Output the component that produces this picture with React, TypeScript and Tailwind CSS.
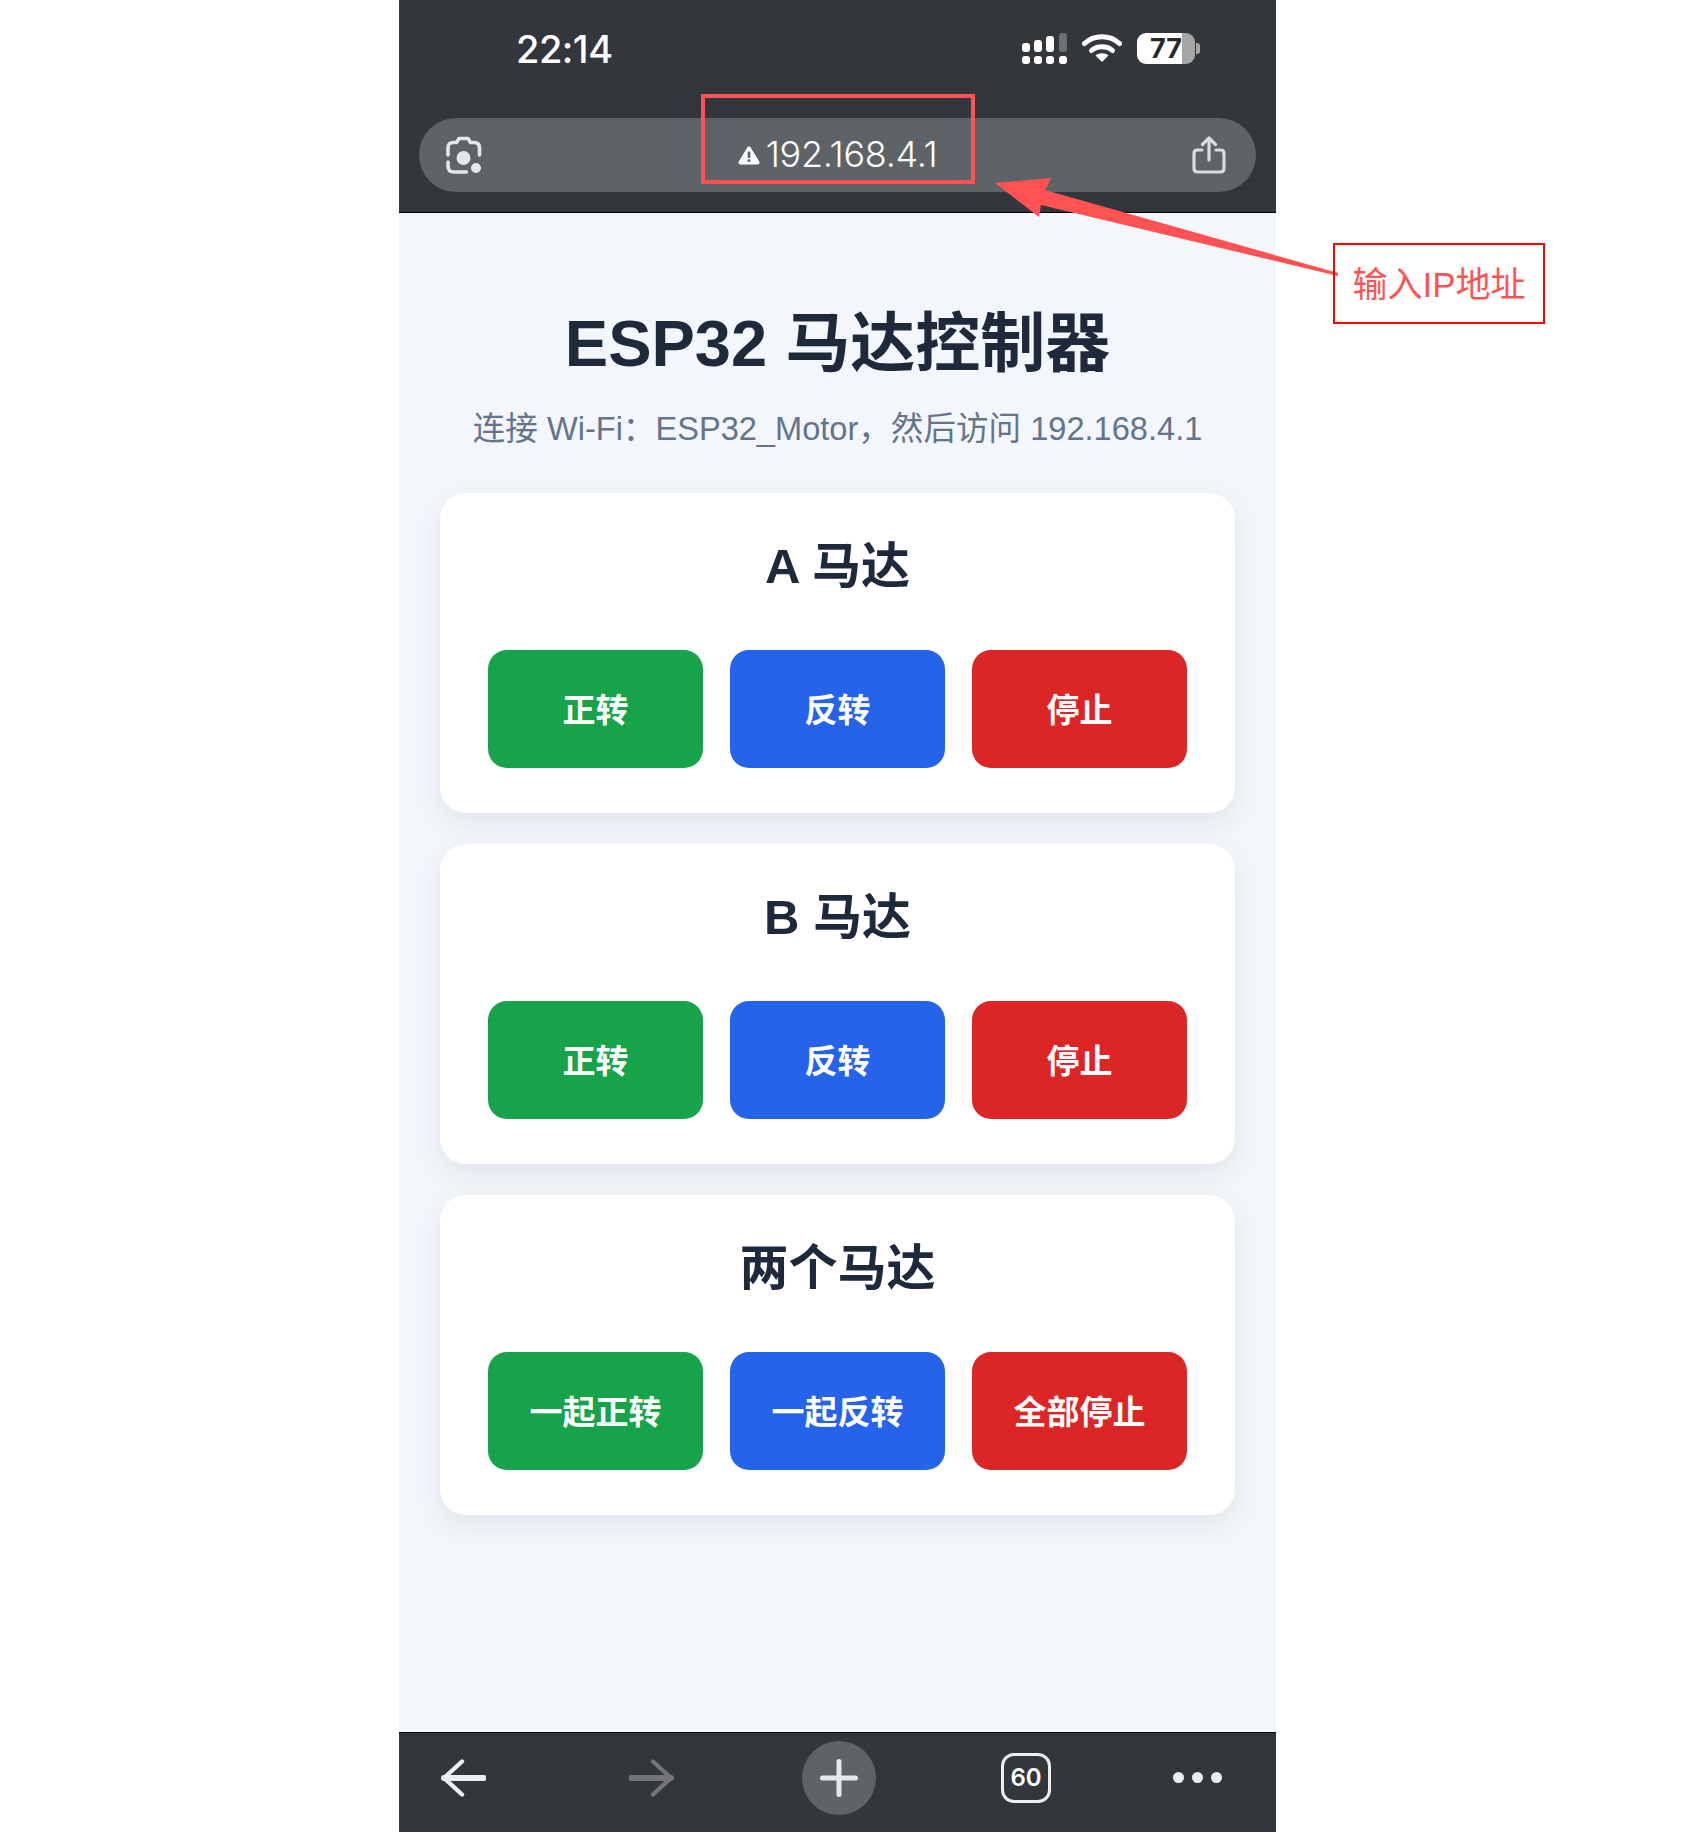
const SANS = "font-['Liberation_Sans','Noto_Sans_CJK_SC',sans-serif]"

const motors = [
  { title: 'A 马达', actions: ['正转', '反转', '停止'] },
  { title: 'B 马达', actions: ['正转', '反转', '停止'] },
  { title: '两个马达', actions: ['一起正转', '一起反转', '全部停止'] },
]

const buttonColors = ['bg-[#16a34a]', 'bg-[#2563eb]', 'bg-[#dc2626]']

function SignalIcon() {
  return (
    <svg width="45" height="31" viewBox="0 0 45 31" className="block">
      <rect x="0" y="10" width="8" height="9" rx="3" fill="#fff" />
      <rect x="12" y="7" width="8" height="12" rx="3" fill="#fff" />
      <rect x="24" y="3" width="8" height="16" rx="3" fill="#fff" />
      <rect x="37" y="0" width="8" height="19" rx="3" fill="#6d7073" />
      {[0, 12, 24, 37].map((x) => (
        <rect key={x} x={x} y="23" width="8" height="8" rx="3" fill="#fff" />
      ))}
    </svg>
  )
}

function WifiIcon() {
  return (
    <svg width="40" height="29" viewBox="0 0 40 29" className="block">
      <path d="M2.5 10.5C12 1.5 28 1.5 37.5 10.5" fill="none" stroke="#fff" strokeWidth="5" strokeLinecap="round" />
      <path d="M9.5 17.5C15 12.5 25 12.5 30.5 17.5" fill="none" stroke="#fff" strokeWidth="5" strokeLinecap="round" />
      <path d="M20 29L13.5 22.5C17 19.5 23 19.5 26.5 22.5Z" fill="#fff" />
    </svg>
  )
}

function BatteryIcon() {
  return (
    <div className="flex items-center gap-[1px]">
      <div className="relative w-[58px] h-[31px] rounded-[9px] bg-[linear-gradient(90deg,#fff_45px,#a3a5a6_45px)] pl-[13px] flex items-center font-['Inter',sans-serif] text-[27px] leading-none font-bold text-[#26292c]">
        77
      </div>
      <div className="w-[4px] h-[11px] rounded-r-[3px] bg-[#a3a5a6]" />
    </div>
  )
}

function LensIcon() {
  return (
    <svg width="38" height="41" viewBox="0 0 38 41" fill="none" className="block">
      <path
        d="M3 20V13C3 9.5 5 7.5 8.5 7.5H11.5L14 3.5H23L25.5 7.5H29C32.5 7.5 34.5 9.5 34.5 13V20"
        stroke="#e4e6e8"
        strokeWidth="3.6"
        strokeLinecap="round"
        strokeLinejoin="round"
      />
      <path d="M3 27V31C3 35 5 37 9 37H21.5" stroke="#e4e6e8" strokeWidth="3.6" strokeLinecap="round" />
      <circle cx="18.5" cy="23" r="7" fill="#e4e6e8" />
      <circle cx="31" cy="33" r="5" fill="#e4e6e8" />
    </svg>
  )
}

function ShareIcon() {
  return (
    <svg width="34" height="38" viewBox="0 0 34 38" fill="none" className="block">
      <path
        d="M10 14H5.5C3 14 2 15.2 2 17.7V32.3C2 34.8 3 36 5.5 36H28.5C31 36 32 34.8 32 32.3V17.7C32 15.2 31 14 28.5 14H24"
        stroke="#d9dbdd"
        strokeWidth="3.2"
        strokeLinecap="round"
      />
      <path d="M17 24V2.5M10.5 8.5L17 2L23.5 8.5" stroke="#d9dbdd" strokeWidth="3.2" strokeLinecap="round" strokeLinejoin="round" />
    </svg>
  )
}

function WarnIcon() {
  return (
    <svg width="22" height="19" viewBox="0 0 22 19" className="block">
      <path d="M11 2.5L19.5 16.5H2.5Z" fill="#fff" stroke="#fff" strokeWidth="4" strokeLinejoin="round" />
      <rect x="9.6" y="5.5" width="2.8" height="6.5" rx="1" fill="#5e6367" />
      <circle cx="11" cy="14.6" r="1.5" fill="#5e6367" />
    </svg>
  )
}

function ArrowIcon({ color, flip }: { color: string; flip?: boolean }) {
  return (
    <svg width="45" height="38" viewBox="0 0 45 38" fill="none" className={flip ? 'block -scale-x-100' : 'block'}>
      <path d="M3 19H42.5" stroke={color} strokeWidth="6" strokeLinecap="round" />
      <path d="M21 2.5L3 19L21 35.5" stroke={color} strokeWidth="4.4" strokeLinecap="round" strokeLinejoin="round" />
    </svg>
  )
}

function MotorCard({ title, actions }: { title: string; actions: string[] }) {
  return (
    <section className="bg-white rounded-[26px] pt-[41px] px-[48px] pb-[45px] shadow-[0_10px_30px_rgba(15,23,42,0.08)]">
      <h2 className="text-[49px] leading-[64px] font-bold text-center text-[#1e293b] mb-[52px]">{title}</h2>
      <div className="grid grid-cols-3 gap-[27px]">
        {actions.map((label, i) => (
          <button
            key={i}
            className={`h-[118px] rounded-[19px] pt-[3px] text-white text-[33px] font-bold flex items-center justify-center ${buttonColors[i]}`}
          >
            {label}
          </button>
        ))}
      </div>
    </section>
  )
}

export default function App() {
  return (
    <div className={`relative w-[1702px] h-[1832px] bg-white overflow-hidden ${SANS}`}>
      <div className="ml-[399px] w-[877px] h-full flex flex-col bg-[#f3f6fb]">
        {/* browser top bar */}
        <header className="h-[213px] bg-[#33363a] border-b border-black">
          <div className="h-[118px] flex items-start justify-between pl-[117px] pr-[76px] pt-[33px]">
            <span className="font-['Inter',sans-serif] text-[38px] leading-[32px] font-medium text-white tracking-[-0.5px]">22:14</span>
            <div className="flex items-start gap-[15px]">
              <SignalIcon />
              <WifiIcon />
              <BatteryIcon />
            </div>
          </div>
          <div className="mx-[20px] h-[74px] rounded-[37px] bg-[#5e6367] flex items-center justify-between pl-[26px] pr-[30px]">
            <LensIcon />
            <div className="flex items-center gap-[6px] text-white">
              <WarnIcon />
              <span className="font-['Inter',sans-serif] text-[36px] font-light leading-none tracking-[-0.3px] pb-[2px]">192.168.4.1</span>
            </div>
            <ShareIcon />
          </div>
        </header>

        <main className="flex-1 px-[41px] pt-[93px]">
          <h1 className="text-[65px] leading-[76px] font-bold text-center text-[#1e293b]">ESP32 马达控制器</h1>
          <p className="mt-[25px] text-[32.6px] leading-[44px] text-center text-[#64748b] whitespace-nowrap">
            连接 Wi-Fi：ESP32_Motor，然后访问 192.168.4.1
          </p>
          <div className="mt-[42px] flex flex-col gap-[31px]">
            {motors.map((m) => (
              <MotorCard key={m.title} title={m.title} actions={m.actions} />
            ))}
          </div>
        </main>

        {/* browser bottom bar */}
        <footer className="h-[100px] bg-[#33363a] border-t border-black flex items-center pl-[42px] pb-[10px]">
          <ArrowIcon color="#eceef0" />
          <div className="ml-[143px]">
            <ArrowIcon color="#737577" flip />
          </div>
          <div className="ml-[128px] w-[74px] h-[74px] rounded-full bg-[#5e6367] flex items-center justify-center">
            <svg width="38" height="38" viewBox="0 0 38 38" className="block">
              <path d="M19 2.5V35.5M2.5 19H35.5" stroke="#e6e8ea" strokeWidth="5" strokeLinecap="round" />
            </svg>
          </div>
          <div className="ml-[125px] w-[50px] h-[50px] rounded-[13px] border-[3px] border-[#eceef0] flex items-center justify-center font-['Inter',sans-serif] text-[24px] font-semibold text-white">
            60
          </div>
          <div className="ml-[122px] flex gap-[8px]">
            <span className="w-[11px] h-[11px] rounded-full bg-[#eceef0]" />
            <span className="w-[11px] h-[11px] rounded-full bg-[#eceef0]" />
            <span className="w-[11px] h-[11px] rounded-full bg-[#eceef0]" />
          </div>
        </footer>
      </div>

      {/* annotation layer */}
      <div className="absolute left-[701px] top-[94px] w-[274px] h-[90px] border-[4px] border-[#ff5353]" />
      <svg width="1702" height="1832" className="absolute left-0 top-0 pointer-events-none">
        <polygon points="995,183 1051,178 1045,190 1338,273 1338,276 1041,205 1039,217" fill="#ff5353" />
      </svg>
      <div className="absolute left-[1333px] top-[243px] w-[212px] h-[81px] pt-[4px] border-2 border-[#ff0000] flex items-center justify-center text-[35px] text-[#ff5353] whitespace-nowrap">
        输入IP地址
      </div>
    </div>
  )
}
